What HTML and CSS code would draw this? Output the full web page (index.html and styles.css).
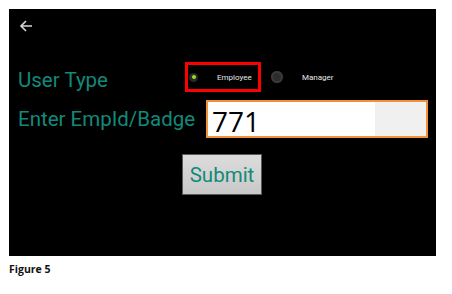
FILE: index.html
```html
<!DOCTYPE html>
<html>
<head>
<meta charset="utf-8">
<link rel="stylesheet" href="styles.css">
</head>
<body>
<div class="screen">
  <div class="topbar">
    <svg class="back" width="14" height="14" viewBox="0 0 14 14"><path d="M13 7H2M7 2L2 7l5 5" fill="none" stroke="#d6d6d6" stroke-width="1.6"/></svg>
  </div>
  <div class="row type-row">
    <span class="label">User Type</span>
    <div class="radios">
      <div class="radio sel"><span class="dot small"><span class="in"></span></span><span class="rtext">Employee</span></div>
      <div class="radio"><span class="dot big"></span><span class="rtext">Manager</span></div>
    </div>
  </div>
  <div class="row id-row">
    <span class="label">Enter EmpId/Badge</span>
    <div class="input"><span class="val">771</span><span class="pad"></span></div>
  </div>
  <div class="btnrow"><button class="submit">Submit</button></div>
</div>
<div class="caption">Figure 5</div>
</body>
</html>
```
FILE: styles.css
```css
html,body{margin:0;padding:0;background:#fff;}
body{padding:9px 0 0 9px;width:452px;height:294px;box-sizing:border-box;overflow:hidden;}
.screen{width:427px;height:247px;background:#000;box-sizing:border-box;font-family:Roboto,"Noto Sans",sans-serif;}
.topbar{height:53px;padding:10px 0 0 10px;box-sizing:border-box;}
.back{display:block;}
.row{display:flex;align-items:center;padding-left:9px;}
.label{color:#128a7b;font-size:20.5px;line-height:26px;white-space:nowrap;}
.type-row{height:30px;}
.type-row .label{flex:0 0 167px;margin-top:6px;}
.radios{display:flex;align-items:center;}
.radio{display:flex;align-items:center;height:30px;box-sizing:border-box;}
.radio.sel{border:3px solid #f00;width:76px;padding-left:1px;}
.dot{border-radius:50%;display:flex;align-items:center;justify-content:center;flex:none;}
.dot.small{width:9px;height:9px;background:#2a2a2a;}
.dot .in{width:4px;height:4px;border-radius:50%;background:#9be21c;}
.dot.big{width:12px;height:12px;background:#2c2c2c;box-shadow:inset 0 0 0 2px #3a3a3a;margin-left:10px;}
.rtext{color:#e8e8e8;font-size:8px;}
.radio.sel .rtext{margin-left:19px;}
.radio:not(.sel) .rtext{margin-left:19px;}
.id-row{margin-top:8px;}
.id-row .label{flex:0 0 188px;}
.input{width:222px;height:38px;border:2px solid #f0923a;box-sizing:border-box;display:flex;background:#fff;}
.val{flex:1;color:#000;font-family:"Open Sans",sans-serif;font-size:28px;line-height:38px;padding-left:4px;}
.pad{width:51px;background:#f0f0f0;}
.btnrow{padding-left:173px;margin-top:16px;}
.submit{width:80px;height:41px;background:linear-gradient(#dcdcdc,#c8c8c8);border:1px solid #5a5a5a;color:#128a7b;font-family:Roboto,sans-serif;font-size:20.5px;padding:0;}
.caption{font-family:"Open Sans",sans-serif;font-weight:bold;font-size:10.5px;margin-top:6px;color:#111;}
```
